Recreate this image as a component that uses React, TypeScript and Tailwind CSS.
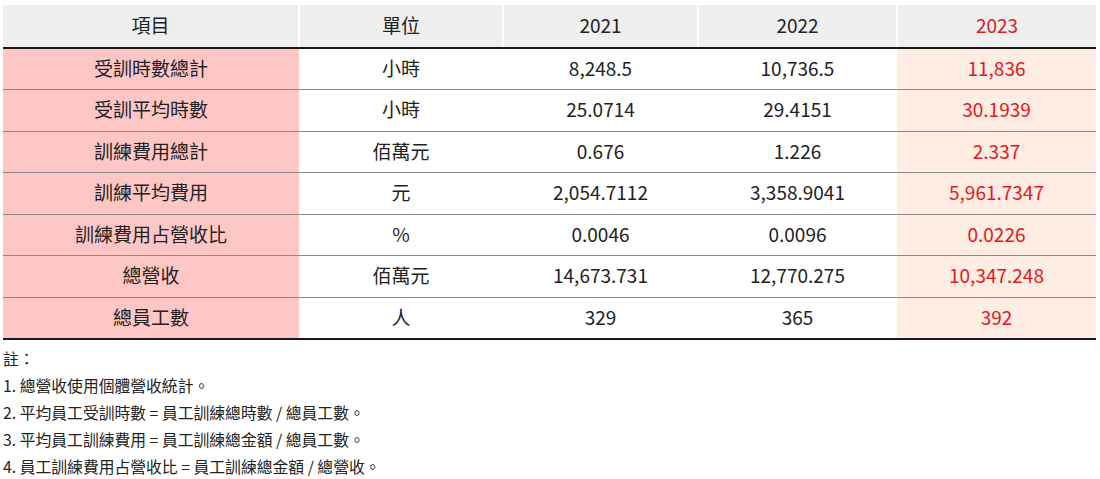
import React from "react";

const rows: [string, string, string, string, string][] = [
  ["受訓時數總計", "小時", "8,248.5", "10,736.5", "11,836"],
  ["受訓平均時數", "小時", "25.0714", "29.4151", "30.1939"],
  ["訓練費用總計", "佰萬元", "0.676", "1.226", "2.337"],
  ["訓練平均費用", "元", "2,054.7112", "3,358.9041", "5,961.7347"],
  ["訓練費用占營收比", "%", "0.0046", "0.0096", "0.0226"],
  ["總營收", "佰萬元", "14,673.731", "12,770.275", "10,347.248"],
  ["總員工數", "人", "329", "365", "392"],
];

const notes = [
  "註：",
  "1. 總營收使用個體營收統計。",
  "2. 平均員工受訓時數 = 員工訓練總時數 / 總員工數。",
  "3. 平均員工訓練費用 = 員工訓練總金額 / 總員工數。",
  "4. 員工訓練費用占營收比 = 員工訓練總金額 / 總營收。",
];

export default function App() {
  return (
    <div
      className="w-[1100px] h-[479px] bg-white pt-[5px] px-[3px] text-[#222] overflow-hidden"
      style={{ fontFamily: '"Noto Sans CJK TC", "Noto Sans", sans-serif' }}
    >
      <table className="w-[1093px] border-collapse table-fixed text-[19px] leading-[24px]">
        <colgroup>
          <col className="w-[296px]" />
          <col className="w-[204px]" />
          <col className="w-[195px]" />
          <col className="w-[199px]" />
          <col className="w-[199px]" />
        </colgroup>
        <thead>
          <tr>
            <th className="h-[43px] bg-[#efefef] font-normal border-b-2 border-b-[#1a1a1a] p-0 pb-[2px]">項目</th>
            <th className="h-[43px] bg-[#efefef] font-normal border-b-2 border-b-[#1a1a1a] border-l-2 border-l-white p-0 pb-[2px]">單位</th>
            <th className="h-[43px] bg-[#efefef] font-normal border-b-2 border-b-[#1a1a1a] border-l-2 border-l-white p-0 pb-[2px]">2021</th>
            <th className="h-[43px] bg-[#efefef] font-normal border-b-2 border-b-[#1a1a1a] border-l-2 border-l-white p-0 pb-[2px]">2022</th>
            <th className="h-[43px] bg-[#efefef] font-normal border-b-2 border-b-[#1a1a1a] border-l-2 border-l-white p-0 pb-[2px] text-[#e0191e]">2023</th>
          </tr>
        </thead>
        <tbody>
          {rows.map((r, i) => {
            const last = i === rows.length - 1;
            const b = last ? "border-b-2 border-b-[#1a1a1a]" : "border-b border-b-[#8a8a8a]";
            return (
              <tr key={i}>
                <td className={`h-[41.5px] p-0 pb-[2px] text-center bg-[#ffc6c6] ${b}`}>{r[0]}</td>
                <td className={`h-[41.5px] p-0 pb-[2px] text-center ${b}`}>{r[1]}</td>
                <td className={`h-[41.5px] p-0 pb-[2px] text-center ${b}`}>{r[2]}</td>
                <td className={`h-[41.5px] p-0 pb-[2px] text-center ${b}`}>{r[3]}</td>
                <td className={`h-[41.5px] p-0 pb-[2px] text-center bg-[#ffece3] text-[#e0191e] ${b}`}>{r[4]}</td>
              </tr>
            );
          })}
        </tbody>
      </table>
      <div className="mt-[5px] text-[15.8px] leading-[27px]">
        {notes.map((n, i) => (
          <div key={i}>{n}</div>
        ))}
      </div>
    </div>
  );
}
